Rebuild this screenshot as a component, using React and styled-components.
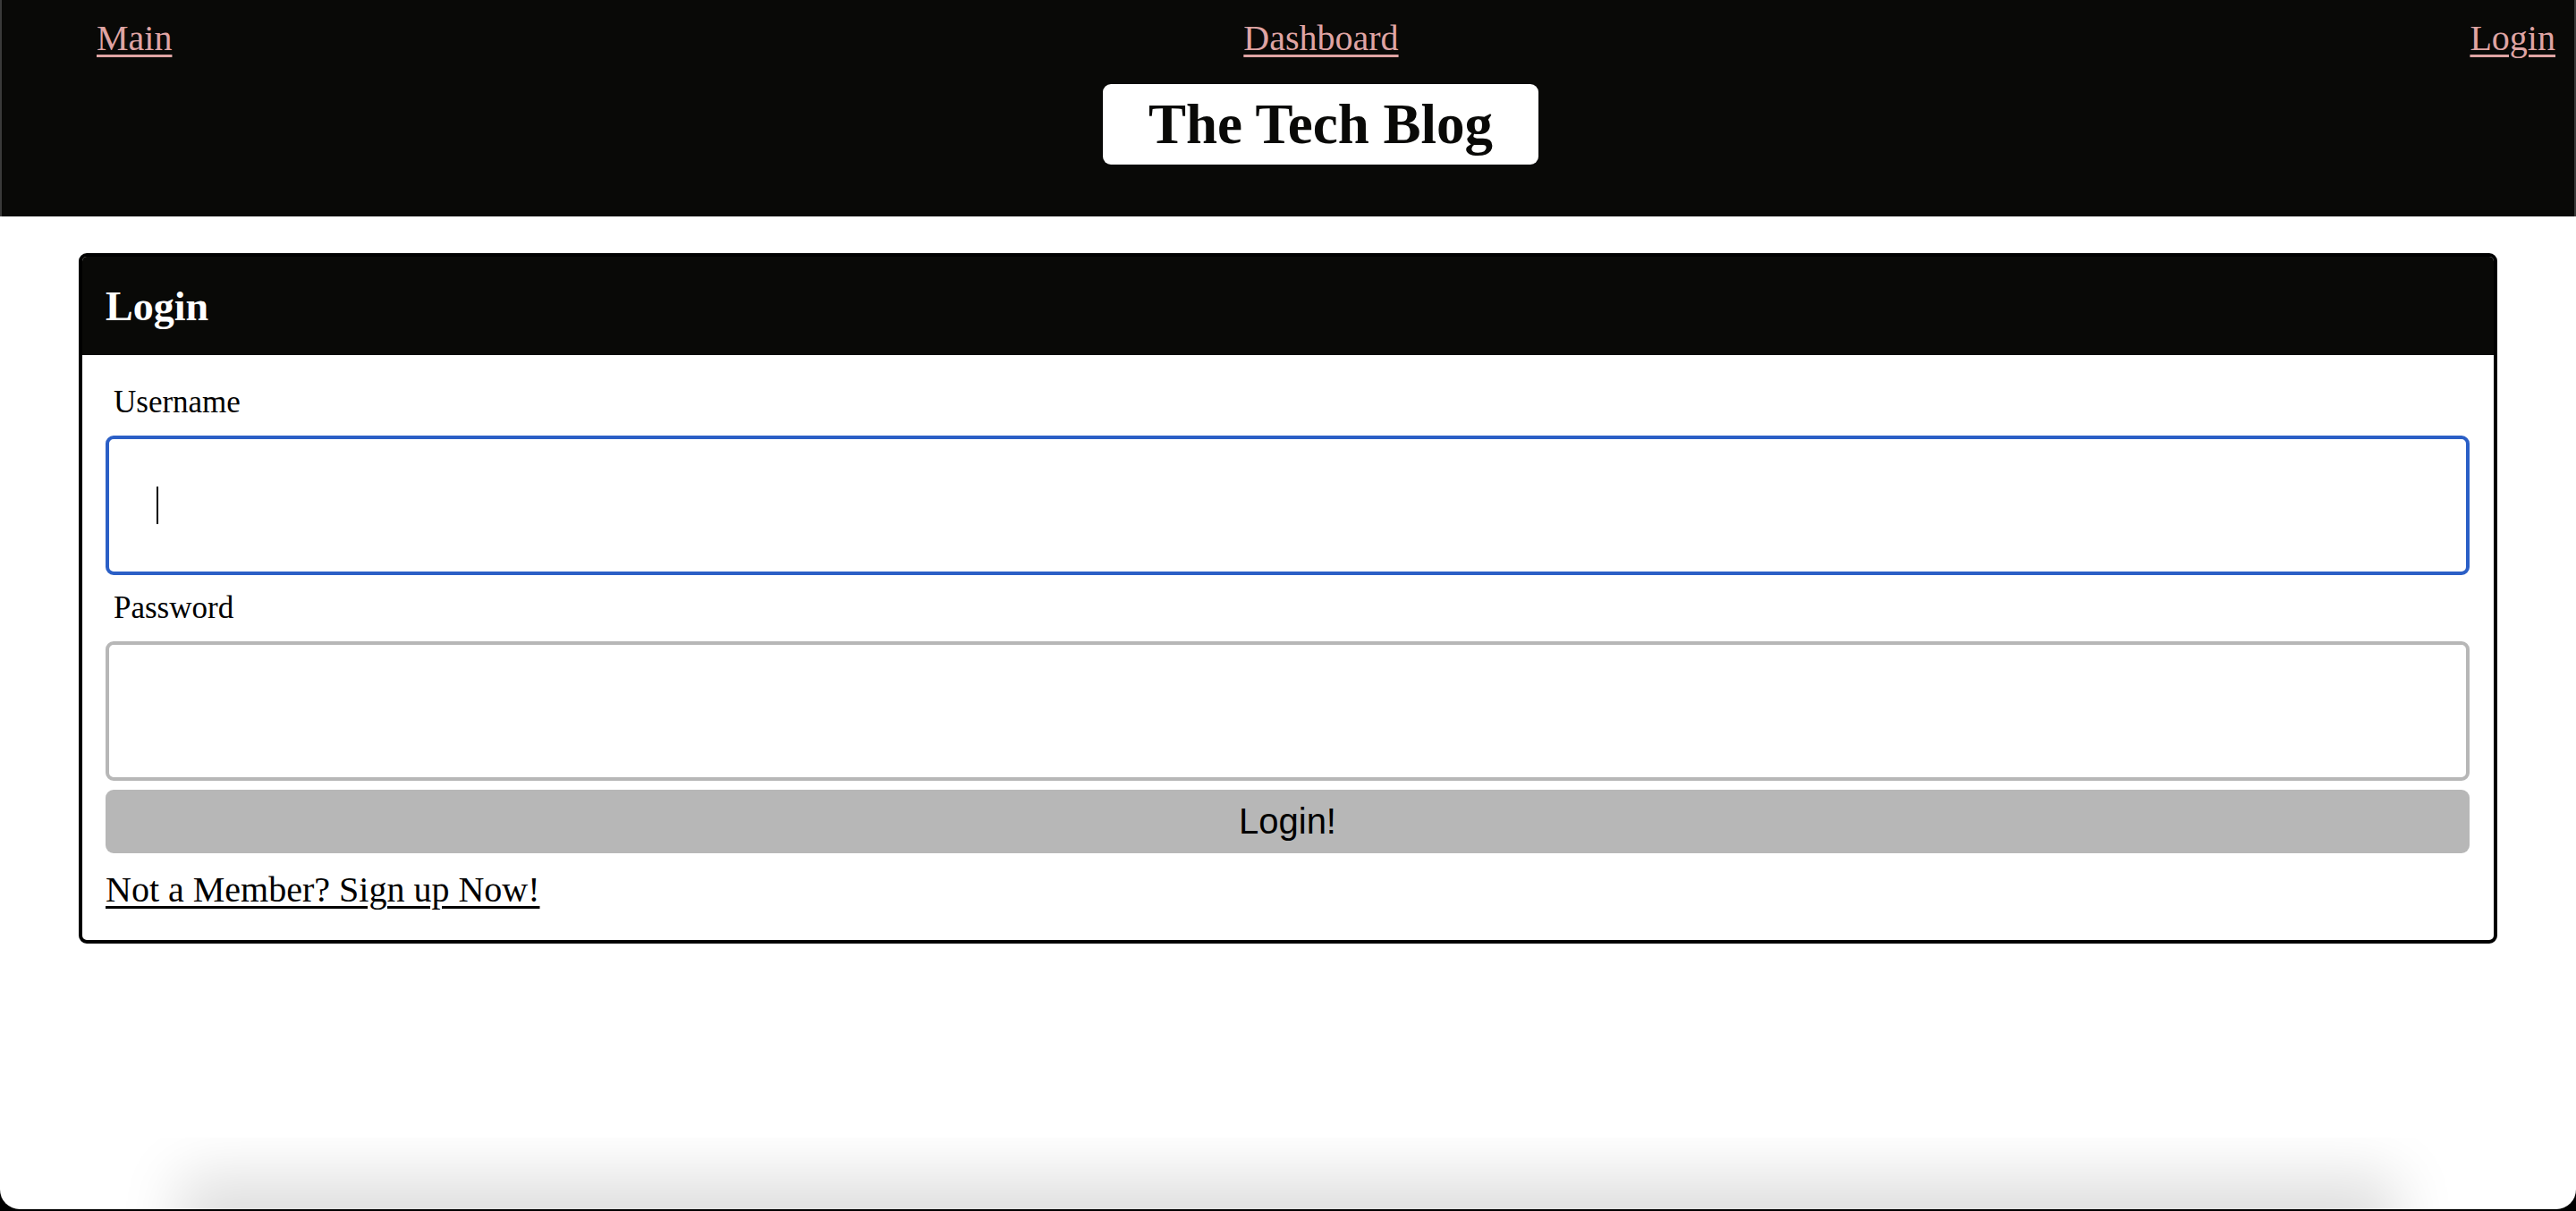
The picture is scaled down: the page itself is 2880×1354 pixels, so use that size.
import { useState } from 'react';
import styled, { createGlobalStyle } from 'styled-components';

const GlobalStyle = createGlobalStyle`
  html {
    background: #000;
  }
  body {
    margin: 0;
    font-family: "Liberation Serif", "Times New Roman", serif;
  }
`;

// Page shell
const Page = styled.div`
  min-height: 1352px;
  background: #fff;
  border-radius: 0 0 22px 22px;
  overflow: hidden;
  display: flex;
  flex-direction: column;
`;

const Header = styled.header`
  background: #090907;
  height: 242px;
  box-sizing: border-box;
  padding: 19px 21px 0 94px;
  border-left: 2px solid #3a3a3a;
  border-right: 2px solid #3a3a3a;
  display: flex;
  flex-direction: column;
  align-items: center;
`;

const Nav = styled.nav`
  align-self: stretch;
  display: flex;
  justify-content: space-between;
  align-items: center;
  height: 46px;
`;

const NavLink = styled.a`
  color: #dfa4a3;
  font-size: 40px;
  text-decoration: underline;
  text-decoration-thickness: 3px;
  text-underline-offset: 5px;
  margin-left: ${(p) => p.$offset || 0}px;
`;

const TitleBox = styled.div`
  margin-top: 29px;
  height: 90px;
  padding: 0 51px;
  background: #fff;
  border-radius: 9px;
  display: flex;
  align-items: center;
`;

const Title = styled.h1`
  margin: 0;
  font-size: 63px;
  font-weight: bold;
  color: #090907;
  line-height: 1;
`;

const Main = styled.main`
  padding: 41px 88px 0;
`;

const Card = styled.section`
  border: 4px solid #000;
  border-radius: 9px;
  overflow: hidden;
  background: #fff;
`;

const CardHeader = styled.div`
  background: #090907;
  height: 110px;
  padding-left: 26px;
  display: flex;
  align-items: center;
`;

const CardTitle = styled.h2`
  margin: 0;
  color: #fff;
  font-size: 46px;
  font-weight: bold;
`;

const Form = styled.form`
  display: flex;
  flex-direction: column;
  padding: 0 27px 33px 26px;
`;

const Label = styled.label`
  margin: ${(p) => p.$top}px 0 17px 9px;
  font-size: 35px;
  line-height: 40px;
  color: #000;
`;

const Field = styled.div`
  position: relative;
  display: flex;
  flex-direction: column;
`;

const Input = styled.input`
  height: 156px;
  box-sizing: border-box;
  padding: 0 52px;
  border: 4px solid ${(p) => (p.$active ? '#2b5fc6' : '#b7b7b7')};
  border-radius: 9px;
  font-family: "Liberation Serif", serif;
  font-size: 36px;
  caret-color: transparent;
  outline: none;
`;

// text cursor drawn over the focused field
const Caret = styled.span`
  position: absolute;
  left: 57px;
  top: 57px;
  width: 2px;
  height: 42px;
  background: #000;
  pointer-events: none;
`;

const Button = styled.button`
  margin-top: 10px;
  height: 71px;
  border: none;
  border-radius: 9px;
  background: #b7b7b7;
  color: #000;
  font-family: "Liberation Sans", Arial, sans-serif;
  font-size: 40px;
`;

const SignupLink = styled.a`
  margin-top: 18px;
  align-self: flex-start;
  color: #000;
  font-size: 40px;
  line-height: 46px;
  text-decoration: underline;
  text-decoration-thickness: 3px;
  text-underline-offset: 5px;
`;

const Filler = styled.div`
  flex: 1;
`;

const BottomShade = styled.div`
  height: 80px;
  overflow: hidden;
`;

const ShadeBlob = styled.div`
  margin: 82px 240px 0;
  height: 40px;
  box-shadow: 0 0 66px 40px rgba(0, 0, 0, 0.13);
`;

export default function App() {
  const [username, setUsername] = useState('');
  const [password, setPassword] = useState('');

  return (
    <>
      <GlobalStyle />
      <Page>
        <Header>
          <Nav>
            <NavLink href="#" $offset={12}>Main</NavLink>
            <NavLink href="#">Dashboard</NavLink>
            <NavLink href="#">Login</NavLink>
          </Nav>
          <TitleBox>
            <Title>The Tech Blog</Title>
          </TitleBox>
        </Header>
        <Main>
          <Card>
            <CardHeader>
              <CardTitle>Login</CardTitle>
            </CardHeader>
            <Form onSubmit={(e) => e.preventDefault()}>
              <Label $top={33} htmlFor="username">Username</Label>
              <Field>
                <Input
                  id="username"
                  type="text"
                  autoFocus
                  $active
                  value={username}
                  onChange={(e) => setUsername(e.target.value)}
                />
                {username === '' && <Caret />}
              </Field>
              <Label $top={17} htmlFor="password">Password</Label>
              <Input
                id="password"
                type="password"
                value={password}
                onChange={(e) => setPassword(e.target.value)}
              />
              <Button type="submit">Login!</Button>
              <SignupLink href="#">Not a Member? Sign up Now!</SignupLink>
            </Form>
          </Card>
        </Main>
        <Filler />
        <BottomShade>
          <ShadeBlob />
        </BottomShade>
      </Page>
    </>
  );
}
